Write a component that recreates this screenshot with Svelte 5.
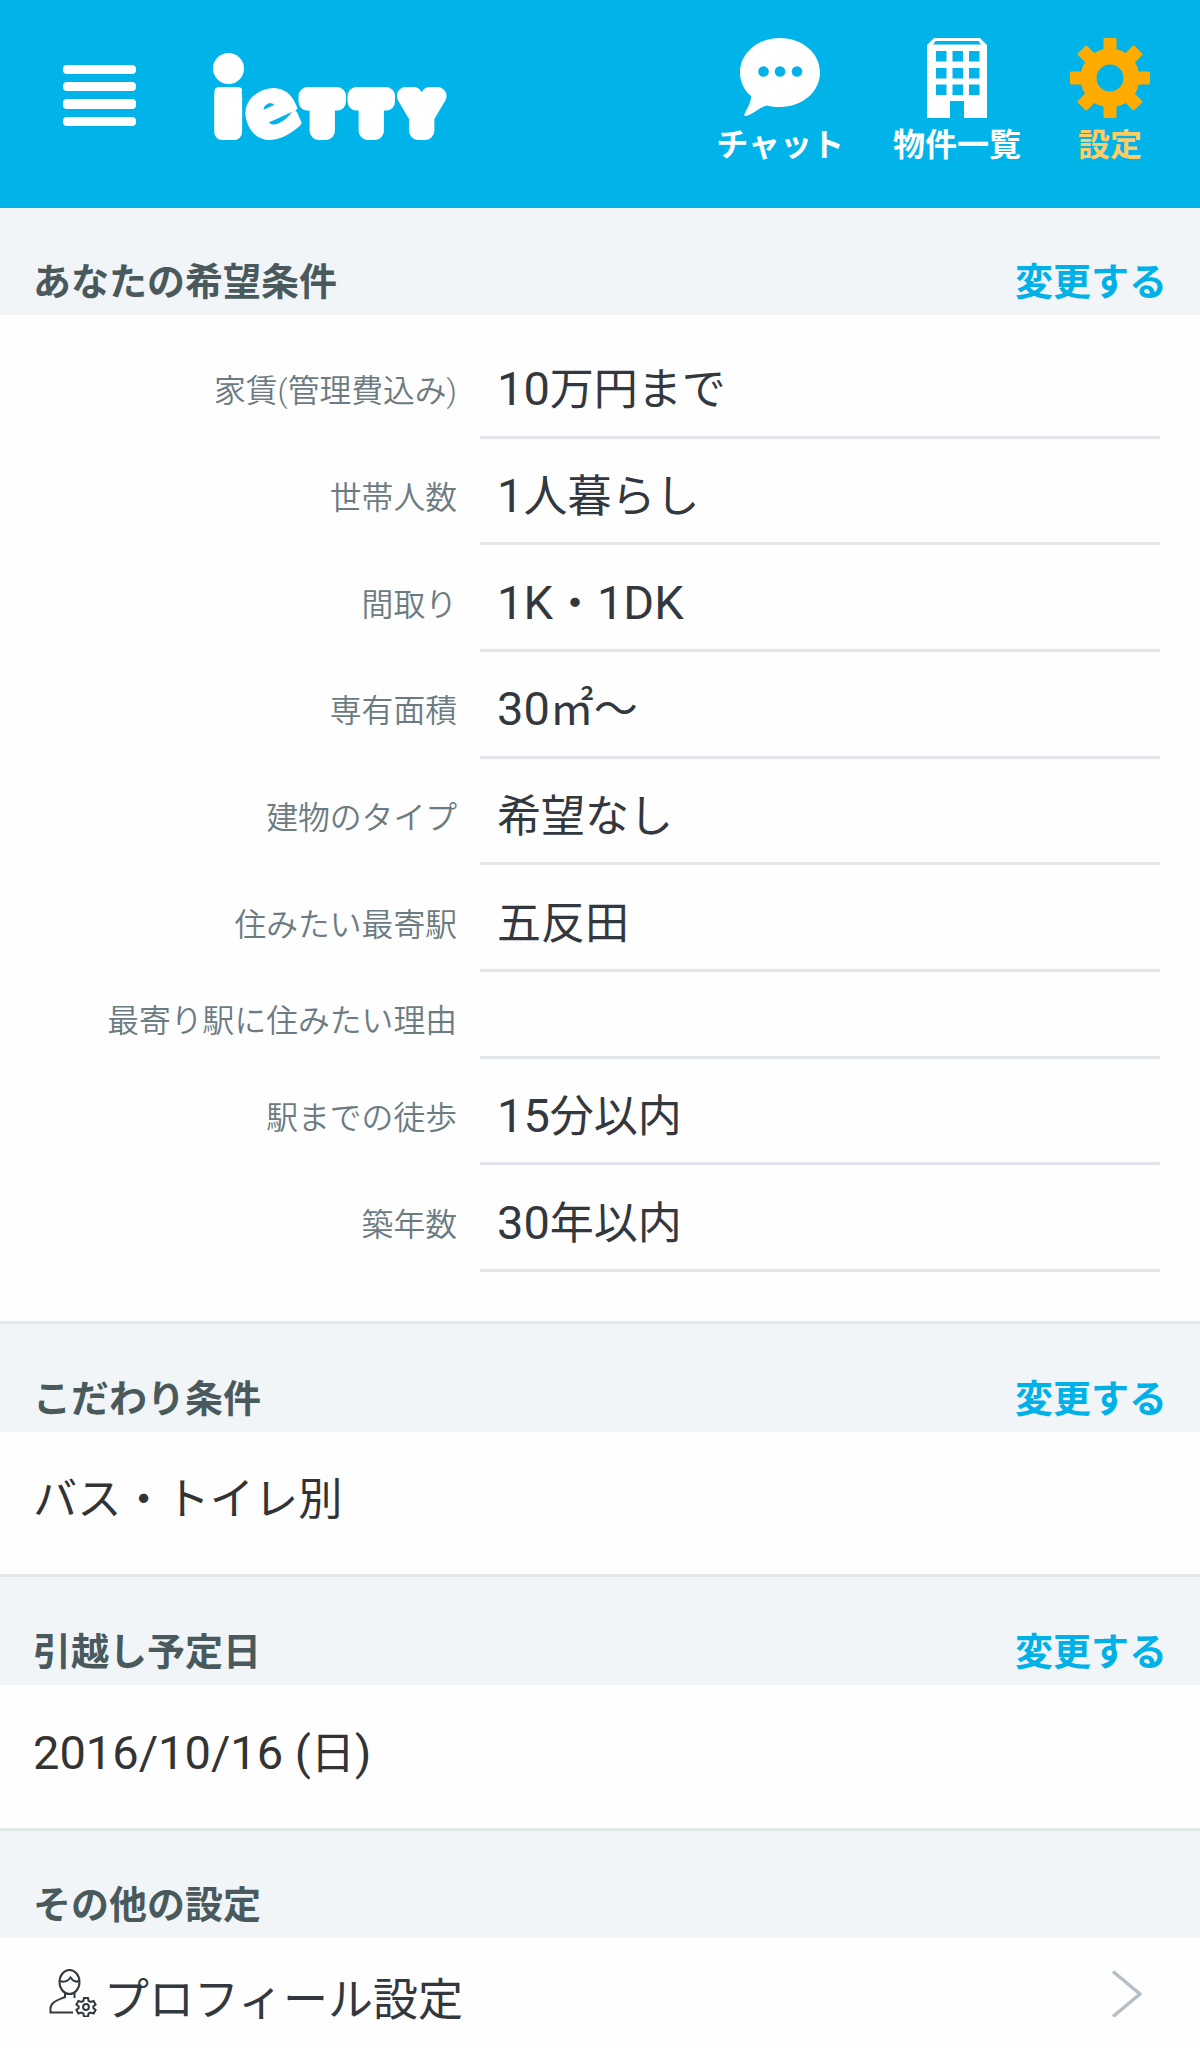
<script>
    const conditions = [
        { label: '家賃(管理費込み)', value: '10万円まで' },
        { label: '世帯人数', value: '1人暮らし' },
        { label: '間取り', value: '1K・1DK' },
        { label: '専有面積', value: '30㎡〜' },
        { label: '建物のタイプ', value: '希望なし' },
        { label: '住みたい最寄駅', value: '五反田' },
        { label: '最寄り駅に住みたい理由', value: '' },
        { label: '駅までの徒歩', value: '15分以内' },
        { label: '築年数', value: '30年以内' }
    ];

    const sections = [
        { title: 'こだわり条件', text: 'バス・トイレ別' },
        { title: '引越し予定日', text: '2016/10/16 (日)' }
    ];

    const windows = [9, 25.5, 42];
    const teeth = [0, 45, 90, 135, 180, 225, 270, 315];

    // latin runs are set a little larger than the kana around them
    const runs = (text) => text.match(/[ -~]+|[^ -~]+/g) || [];
    const isLatin = (text) => /^[ -~]/.test(text);
</script>

{#snippet mixed(text)}
    {#each runs(text) as run}{#if isLatin(run)}<span class="latin">{run}</span>{:else}{run}{/if}{/each}
{/snippet}

<header>
    <button class="menu" aria-label="menu">
        <span></span><span></span><span></span><span></span>
    </button>

    <svg class="logo" width="236" height="90" viewBox="0 0 236 90">
        <clipPath id="stem"><rect x="4" y="34" width="29" height="54" rx="5" /></clipPath>
        <circle cx="18.5" cy="15.5" r="15.5" />
        <g clip-path="url(#stem)"><text class="i" x="6.5" y="79">i</text></g>
        <text class="e" x="34.500" y="83" transform="rotate(-24 61.5 60.5)">e</text>
        <text class="t" x="97" y="78">T</text>
        <text class="t" x="146" y="78">T</text>
        <text class="t" x="195" y="78">Y</text>
    </svg>

    <nav>
        <a href="#chat">
            <svg width="80" height="80" viewBox="0 0 80 80">
                <path fill="#fff" d="M40 0C62 0 80 15 80 34.500C80 54 62 69 40 69C35 69 31 68.500 27 67.500C18 70 11 78 5 78C1.500 78 12 66 11 58C4 52 0 44 0 34.500C0 15 18 0 40 0Z" />
                <g fill="#00b3e9"><circle cx="23.500" cy="33.500" r="5.300" /><circle cx="40" cy="33.500" r="5.300" /><circle cx="57" cy="33.500" r="5.300" /></g>
            </svg>
            <span>チャット</span>
        </a>
        <a href="#list">
            <svg width="60" height="80" viewBox="0 0 60 80">
                <path fill="#fff" d="M7 0H53L60 7V80H37V63H23V80H0V7Z" />
                <path fill="#00b3e9" d="M8.500 3H51.500L54 6.500H6Z" />
                {#each [13, 30, 46.5] as y}
                    {#each windows as x}
                        <rect {x} {y} width="10.500" height="10.500" fill="#00b3e9" />
                    {/each}
                {/each}
            </svg>
            <span>物件一覧</span>
        </a>
        <a href="#settings" class="active">
            <svg width="80" height="80" viewBox="-40 -40 80 80">
                {#each teeth as angle}
                    <rect x="-6.500" y="-40" width="13" height="20" rx="1" fill="#ffab00" transform="rotate({angle})" />
                {/each}
                <circle r="21.500" fill="none" stroke="#ffab00" stroke-width="16" />
            </svg>
            <span>設定</span>
        </a>
    </nav>
</header>

<main>
    <section>
        <div class="bar first">
            <h2>あなたの希望条件</h2>
            <a href="#edit">変更する</a>
        </div>
        <dl>
            {#each conditions as { label, value }}
                <div class="row" class:empty={!value}>
                    <dt>{label}</dt>
                    <dd><div>{@render mixed(value)}</div></dd>
                </div>
            {/each}
        </dl>
    </section>

    {#each sections as { title, text }}
        <section>
            <div class="bar">
                <h2>{title}</h2>
                <a href="#edit">変更する</a>
            </div>
            <p>{@render mixed(text)}</p>
        </section>
    {/each}

    <section>
        <div class="bar">
            <h2>その他の設定</h2>
        </div>
        <a class="profile" href="#profile">
            <svg width="48" height="48" viewBox="0 0 48 48" fill="none" stroke="#32383d" stroke-width="2">
                <ellipse cx="20.500" cy="13" rx="10" ry="12" />
                <path d="M11 12C15 13.500 19 12 21.500 8.500C24 12 27 13.500 30 12M16 24V28C9 31 2 33 1.500 39V43.500H24M25.500 24V29" />
                <circle cx="37" cy="38" r="2.900" />
                <path d="M35 29h4l.6 3 2 1 3-1 2 3.500-2.300 2v1.500l2.300 2-2 3.500-3-1-2 1-.6 3h-4l-.6-3-2-1-3 1-2-3.500 2.300-2v-1.500l-2.300-2 2-3.500 3 1 2-1z" />
            </svg>
            <span>プロフィール設定</span>
            <svg class="arrow" width="32" height="48" viewBox="0 0 32 48" fill="none" stroke="#b4bec6" stroke-width="3.500" stroke-linejoin="round">
                <path d="M2 2.500L29 25L2 47.500" />
            </svg>
        </a>
    </section>
</main>

<style>
    :global(body) {
        background: #fefefe;
        font-family: Roboto, "Noto Sans CJK JP", sans-serif;
    }

    header {
        height: 208px;
        box-sizing: border-box;
        padding: 38px 50px 0 63px;

        display: flex;
        align-items: flex-start;

        background: #00b3e9;
    }

    .menu {
        width: 73px;
        margin: 27px 0 0;
        padding: 0;

        display: flex;
        flex-direction: column;
        gap: 8px;

        background: none;
        border: none;
    }

    .menu span {
        height: 9.200px;

        border-radius: 4px;
        background: #fff;
    }

    .logo {
        margin: 15px 0 0 74px;

        overflow: visible;
        fill: #fff;
    }

    .logo text {
        font-family: "DejaVu Sans", sans-serif;
        font-weight: 700;
        stroke: #fff;
        stroke-linejoin: round;
    }

    .logo .i {
        font-size: 68px;
        stroke-width: 16px;
    }

    .logo .e {
        font-size: 80px;
        stroke-width: 5px;
    }

    .logo .t {
        font-family: "Liberation Sans", sans-serif;
        font-size: 50px;
        stroke-width: 18px;
    }

    nav {
        margin-left: auto;

        display: flex;
        gap: 49px;
    }

    nav a {
        display: flex;
        flex-direction: column;
        align-items: center;

        color: #fff;
        font-size: 32px;
        font-weight: 700;
        line-height: 54px;
        text-decoration: none;
    }

    nav .active {
        color: #ffcb65;
    }

    a span {
        white-space: nowrap;
    }

    .bar {
        height: 110.667px;
        box-sizing: border-box;
        padding: 35px 33px 0;

        display: flex;
        justify-content: space-between;
        align-items: center;

        border-top: 3px solid #e2e7ea;
        background: #f1f5f8;

        font-size: 38px;
        font-weight: 700;
    }

    .first {
        height: 107px;
        padding-top: 34px;

        border-top: none;
    }

    h2 {
        margin: 0;

        color: #4a5a5c;
        font-size: 38px;
    }

    .bar a {
        color: #00b1e8;
        text-decoration: none;
    }

    dl {
        margin: 0;
        padding: 17px 40px 49px 0;
    }

    .row {
        height: 106.667px;

        display: grid;
        grid-template-columns: 457px 1fr;
        column-gap: 23px;
    }

    .row.empty {
        height: 86.667px;
    }

    dt, dd {
        margin: 0;
        padding-top: 6px;

        display: flex;
        align-items: center;
    }

    dt {
        justify-content: flex-end;

        color: #6c7b82;
        font-size: 31.800px;
        font-weight: 350;
    }

    dd {
        padding-top: 5px;
        padding-left: 17px;

        border-bottom: 3px solid #e2e6eb;

        color: #32383d;
        font-size: 44px;
    }

    .latin {
        font-size: 47px;
    }

    p {
        height: 142.667px;
        margin: 0;
        padding-left: 33px;

        color: #333;
        font-size: 44.200px;
        line-height: 136px;
    }

    .profile {
        height: 110px;
        padding: 0 57px 0 49px;

        display: flex;
        align-items: center;

        color: #32383d;
        font-size: 45px;
        text-decoration: none;
    }

    .profile span {
        margin-left: 7px;
        padding-top: 7px;
    }

    .arrow {
        margin-left: auto;
    }
</style>
